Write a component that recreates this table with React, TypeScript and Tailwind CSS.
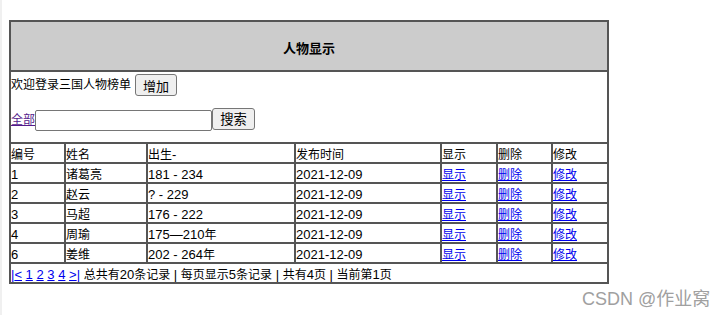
import React from "react";

const CJK = /([\u2e80-\u9fff\uf900-\ufaff\uff00-\uffef]+)/;

function T({ s }: { s: string }) {
  const parts = s.split(CJK);
  return (
    <>
      {parts.map((p, i) =>
        p === "" ? null : i % 2 === 1 ? (
          <span key={i} className="text-[12px] leading-none">
            {p}
          </span>
        ) : (
          <span key={i}>{p}</span>
        )
      )}
    </>
  );
}

const rows: [string, string, string][] = [
  ["1", "诸葛亮", "181 - 234"],
  ["2", "赵云", "? - 229"],
  ["3", "马超", "176 - 222"],
  ["4", "周瑜", "175—210年"],
  ["6", "姜维", "202 - 264年"],
];

const cellFirst = "h-[18px] pt-[1.5px] leading-[18px] whitespace-nowrap overflow-visible";
const cell =
  "h-[18px] pt-[1.5px] leading-[18px] whitespace-nowrap overflow-visible border-l-2 border-[#555555]";
const rowCls =
  "grid grid-cols-[53px_82px_148px_146px_56px_55px_56px] border-t-2 border-[#555555]";
const link = "text-[#0000ee] underline";

function Cell({ i, children }: { i: number; children: React.ReactNode }) {
  return <div className={i === 0 ? cellFirst : cell}>{children}</div>;
}

export default function App() {
  const head = ["编号", "姓名", "出生-", "发布时间", "显示", "删除", "修改"];
  return (
    <div className="relative flex w-[727px] h-[315px] bg-white text-black text-[13px] font-['Liberation_Sans','Noto_Sans_CJK_SC',sans-serif]">
      <div className="w-[2px] h-full bg-[#f0f0f0]" />
      <div className="pl-[7px] pt-[20px]">
        <div className="w-[600px] border-2 border-[#555555]">
          {/* title */}
          <div className="h-[48px] bg-[#cccccc] flex items-center justify-center pt-[2px]">
            <span className="font-bold text-[13px] leading-none font-['Noto_Sans_CJK_SC',sans-serif]">
              人物显示
            </span>
          </div>
          {/* controls */}
          <div className="h-[72px] border-t-2 border-[#555555] pt-[2px]">
            <div className="flex items-center h-[22px]">
              <span className="h-[22px] leading-[22px] whitespace-nowrap">
                <T s="欢迎登录三国人物榜单" />
              </span>
              <button className="ml-[4px] w-[42px] h-[22px] border border-[#767676] rounded-[3px] bg-[#efefef] flex items-center justify-center">
                <span className="text-[13px] leading-none font-['Noto_Sans_CJK_SC',sans-serif]">
                  增加
                </span>
              </button>
            </div>
            <div className="mt-[12px] flex items-start h-[23px]">
              <span className="h-[23px] leading-[23px] whitespace-nowrap">
                <a className="text-[#551a8b] underline">
                  <T s="全部" />
                </a>
              </span>
              <input
                className="mt-[2px] w-[177px] h-[21px] border border-[#767676] rounded-[2px] bg-white outline-none"
                defaultValue=""
              />
              <button className="w-[43px] h-[22px] border border-[#767676] rounded-[3px] bg-[#efefef] flex items-center justify-center">
                <span className="text-[13.33px] leading-none font-['Noto_Sans_CJK_SC',sans-serif]">
                  搜索
                </span>
              </button>
            </div>
          </div>
          {/* header row */}
          <div className={rowCls}>
            {head.map((h, i) => (
              <Cell key={i} i={i}>
                <T s={h} />
              </Cell>
            ))}
          </div>
          {rows.map((r) => (
            <div key={r[0]} className={rowCls}>
              <Cell i={0}>
                <T s={r[0]} />
              </Cell>
              <Cell i={1}>
                <T s={r[1]} />
              </Cell>
              <Cell i={2}>
                <T s={r[2]} />
              </Cell>
              <Cell i={3}>
                <T s="2021-12-09" />
              </Cell>
              <Cell i={4}>
                <a className={link}>
                  <T s="显示" />
                </a>
              </Cell>
              <Cell i={5}>
                <a className={link}>
                  <T s="删除" />
                </a>
              </Cell>
              <Cell i={6}>
                <a className={link}>
                  <T s="修改" />
                </a>
              </Cell>
            </div>
          ))}
          {/* pagination */}
          <div className="border-t-2 border-[#555555]">
            <div className="h-[18px] pt-[1.5px] leading-[18px] whitespace-nowrap">
              <span className="text-[#0000ee]">|</span>
              <a className={link}>&lt;</a> <a className={link}>1</a>{" "}
              <a className={link}>2</a> <a className={link}>3</a>{" "}
              <a className={link}>4</a> <a className={link}>&gt;</a>
              <span className="text-[#0000ee]">|</span>
              <T s=" 总共有20条记录 | 每页显示5条记录 | 共有4页 | 当前第1页" />
            </div>
          </div>
        </div>
      </div>
      <div className="absolute left-[582px] top-[287px] text-[18px] leading-[20px] text-[#a0a0a0] whitespace-nowrap">
        <span>CSDN @</span>
        <span className="font-['Noto_Sans_CJK_SC',sans-serif]">作业窝</span>
      </div>
    </div>
  );
}
